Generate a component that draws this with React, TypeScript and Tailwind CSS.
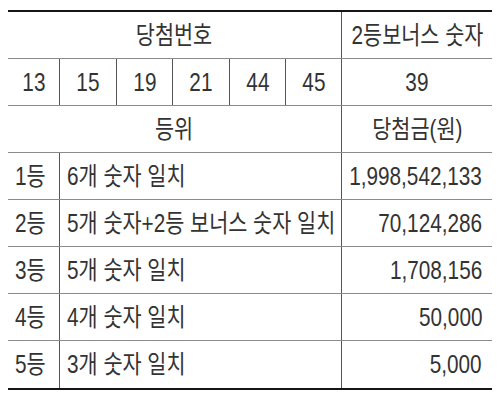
import React from "react";

const font = { fontFamily: '"Liberation Sans", "Noto Sans CJK KR", sans-serif' };

function T({ children, align = "center" }: { children: React.ReactNode; align?: "left" | "center" | "right" }) {
  const origin = align === "left" ? "origin-left" : align === "right" ? "origin-right" : "origin-center";
  return <span className={`inline-block scale-x-[0.83] whitespace-nowrap ${origin}`}>{children}</span>;
}

const nums = [
  { n: "13", w: "w-[52px]" },
  { n: "15", w: "w-[57px]" },
  { n: "19", w: "w-[56px]" },
  { n: "21", w: "w-[57px]" },
  { n: "44", w: "w-[56px]" },
  { n: "45", w: "w-[56px]" },
];

const ranks = [
  { r: "1등", d: "6개 숫자 일치", p: "1,998,542,133" },
  { r: "2등", d: "5개 숫자+2등 보너스 숫자 일치", p: "70,124,286" },
  { r: "3등", d: "5개 숫자 일치", p: "1,708,156" },
  { r: "4등", d: "4개 숫자 일치", p: "50,000" },
  { r: "5등", d: "3개 숫자 일치", p: "5,000" },
];

export default function App() {
  return (
    <div className="w-[500px] h-[400px] bg-white pt-[10px] pl-[8px]">
      <div
        className="w-[484px] border-t-2 border-b-2 border-[#161616] text-[25px] leading-none text-[#333]"
        style={font}
      >
        <div className="flex h-[47px] border-b border-[#8a8a8a]">
          <div className="w-[334px] shrink-0 flex items-center justify-center border-r border-[#555]">
            <T>당첨번호</T>
          </div>
          <div className="flex-1 min-w-0 flex items-center justify-center">
            <T>2등보너스 숫자</T>
          </div>
        </div>
        <div className="flex h-[47px] border-b border-[#8a8a8a]">
          {nums.map((x) => (
            <div key={x.n} className={`${x.w} shrink-0 flex items-center justify-center border-r border-[#555]`}>
              <T>{x.n}</T>
            </div>
          ))}
          <div className="flex-1 min-w-0 flex items-center justify-center">
            <T>39</T>
          </div>
        </div>
        <div className="flex h-[47px] border-b border-[#8a8a8a]">
          <div className="w-[334px] shrink-0 flex items-center justify-center border-r border-[#555]">
            <T>등위</T>
          </div>
          <div className="flex-1 min-w-0 flex items-center justify-center">
            <T>당첨금(원)</T>
          </div>
        </div>
        {ranks.map((x, i) => (
          <div
            key={x.r}
            className={`flex h-[47px] ${i < ranks.length - 1 ? "border-b border-[#8a8a8a]" : ""}`}
          >
            <div className="w-[52px] shrink-0 flex items-center pl-[7px] border-r border-[#555]">
              <T align="left">{x.r}</T>
            </div>
            <div className="w-[282px] shrink-0 flex items-center pl-[7px] border-r border-[#555]">
              <T align="left">{x.d}</T>
            </div>
            <div className="flex-1 min-w-0 flex items-center justify-end pr-[10px]">
              <T align="right">{x.p}</T>
            </div>
          </div>
        ))}
      </div>
    </div>
  );
}
